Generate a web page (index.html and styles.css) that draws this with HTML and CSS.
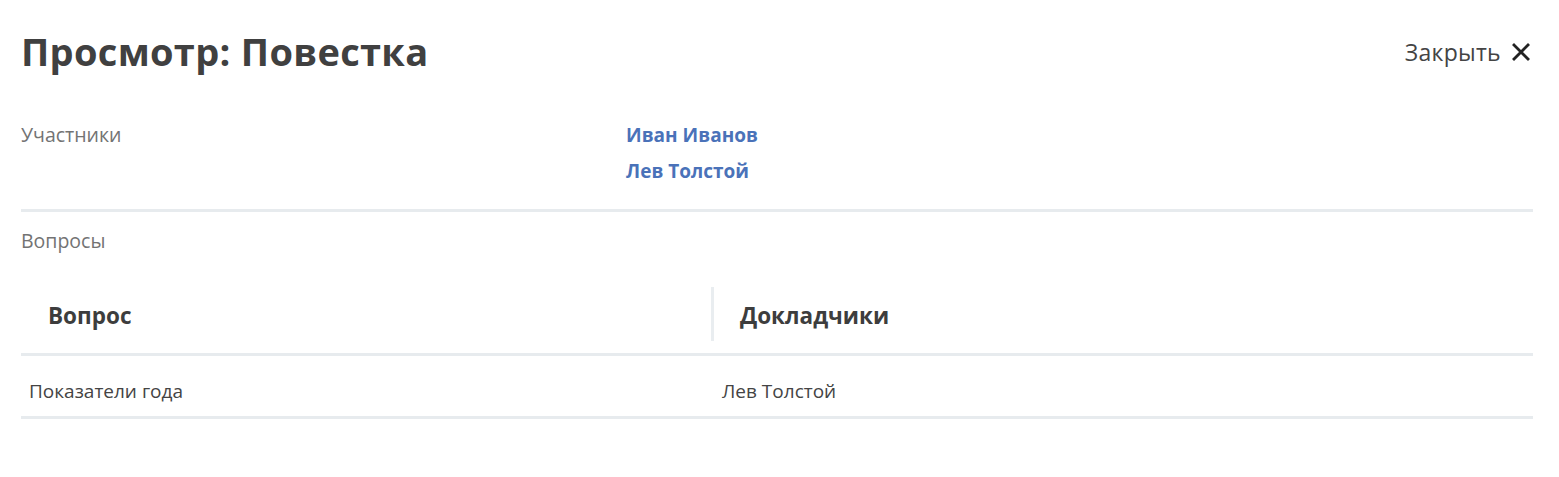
FILE: index.html
```html
<!DOCTYPE html>
<html lang="ru">
<head>
<meta charset="utf-8">
<link rel="stylesheet" href="styles.css">
</head>
<body>
<div class="page">
  <header class="head">
    <h1 class="title">Просмотр: Повестка</h1>
    <button class="close" type="button">
      <span>Закрыть</span>
      <svg class="close-icon" width="20" height="20" viewBox="0 0 20 20"><path d="M3 3 L17 17 M17 3 L3 17" stroke="#222" stroke-width="2.8" fill="none" stroke-linecap="square"/></svg>
    </button>
  </header>

  <section class="field">
    <div class="field-label">Участники</div>
    <div class="field-value">
      <a class="person" href="#">Иван Иванов</a>
      <a class="person" href="#">Лев Толстой</a>
    </div>
  </section>

  <section class="questions">
    <div class="field-label">Вопросы</div>
    <div class="table">
      <div class="thead">
        <div class="th th-first">Вопрос</div>
        <div class="th th-second">Докладчики</div>
      </div>
      <div class="row">
        <div class="td td-first">Показатели года</div>
        <div class="td td-second">Лев Толстой</div>
      </div>
    </div>
  </section>
</div>
</body>
</html>
```
FILE: styles.css
```css
* { box-sizing: border-box; }
html, body { margin: 0; padding: 0; background: #fff; }
body {
  font-family: "Open Sans", "Noto Sans", sans-serif;
  color: #444;
}
.page {
  width: 1554px;
  padding: 27px 0 0 21px;
}
.page > * { width: 1512px; }
.head {
  display: flex;
  align-items: center;
  justify-content: space-between;
  height: 49px;
}
.title {
  margin: 0;
  font-size: 38px;
  font-weight: 700;
  line-height: 49px;
  color: #404040;
  letter-spacing: 0.3px;
}
.close {
  display: flex;
  align-items: center;
  gap: 10px;
  border: 0;
  background: none;
  padding: 0 2px 0 0;
  font-family: inherit;
  font-size: 23px;
  letter-spacing: 0.3px;
  color: #444;
  cursor: pointer;
}
.close-icon { display: block; }
.field {
  display: grid;
  grid-template-columns: 605px 1fr;
  margin-top: 41px;
  padding-bottom: 20px;
  border-bottom: 3px solid #e7ebee;
}
.field-label {
  font-size: 19.5px;
  line-height: 36px;
  color: #737373;
}
.field-value {
  display: flex;
  flex-direction: column;
}
.person {
  font-size: 19px;
  font-weight: 700;
  line-height: 36px;
  color: #4a72b9;
  text-decoration: none;
}
.questions { padding-top: 14px; }
.questions .field-label { line-height: 30px; }
.table { margin-top: 31px; }
.thead {
  display: grid;
  grid-template-columns: 690px 1fr;
  padding-bottom: 12px;
  border-bottom: 3px solid #e7ebee;
}
.th {
  height: 54px;
  display: flex;
  align-items: center;
  padding-top: 2px;
  font-size: 22.5px;
  font-weight: 700;
  color: #3d3d3d;
}
.th-first { padding-left: 27px; }
.th-second {
  border-left: 3px solid #e9edf0;
  padding-left: 26px;
}
.row {
  display: grid;
  grid-template-columns: 690px 1fr;
  border-bottom: 3px solid #e7ebee;
}
.td {
  font-size: 19px;
  line-height: 26px;
  padding: 22px 0 12px;
  color: #444;
}
.td-first { padding-left: 8px; }
.td-second { padding-left: 11px; }
```
